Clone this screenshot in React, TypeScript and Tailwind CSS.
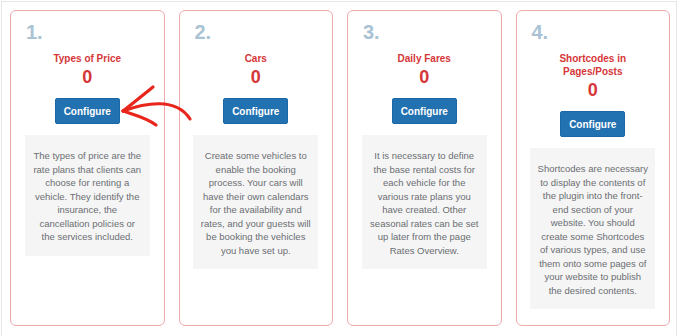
import React from "react";

type Step = {
  num: string;
  title: string[];
  lines: string[];
};

const steps: Step[] = [
  {
    num: "1.",
    title: ["Types of Price"],
    lines: [
      "The types of price are the",
      "rate plans that clients can",
      "choose for renting a",
      "vehicle. They identify the",
      "insurance, the",
      "cancellation policies or",
      "the services included.",
    ],
  },
  {
    num: "2.",
    title: ["Cars"],
    lines: [
      "Create some vehicles to",
      "enable the booking",
      "process. Your cars will",
      "have their own calendars",
      "for the availability and",
      "rates, and your guests will",
      "be booking the vehicles",
      "you have set up.",
    ],
  },
  {
    num: "3.",
    title: ["Daily Fares"],
    lines: [
      "It is necessary to define",
      "the base rental costs for",
      "each vehicle for the",
      "various rate plans you",
      "have created. Other",
      "seasonal rates can be set",
      "up later from the page",
      "Rates Overview.",
    ],
  },
  {
    num: "4.",
    title: ["Shortcodes in", "Pages/Posts"],
    lines: [
      "Shortcodes are necessary",
      "to display the contents of",
      "the plugin into the front-",
      "end section of your",
      "website. You should",
      "create some Shortcodes",
      "of various types, and use",
      "them onto some pages of",
      "your website to publish",
      "the desired contents.",
    ],
  },
];

function StepCard({ step }: { step: Step }) {
  return (
    <div className="flex flex-col items-center rounded-[6px] border border-[#f0a9a9] bg-white px-[14px] pt-[11px]">
      <div className="self-start pl-[1px] text-[20px] font-bold leading-[20px] text-[#aac3d4]">
        {step.num}
      </div>
      <div className="mt-[10px] text-center text-[10px] font-bold leading-[13px] text-[#d63638]">
        {step.title.map((t) => (
          <div key={t}>{t}</div>
        ))}
      </div>
      <div className="mt-[1px] text-[18px] font-bold leading-[22px] text-[#d63638]">0</div>
      <button className="mt-[10px] h-[26px] w-[65px] rounded-[2px] border border-[#1c68a6] bg-[#2271b1] text-[10px] font-bold text-white">
        Configure
      </button>
      <div className="mt-[11px] w-[125px] bg-[#f5f5f5] pb-[12px] pt-[14px] text-center text-[9.5px] leading-[13.5px] text-[#6b6e73]">
        {step.lines.map((l) => (
          <div key={l} className="whitespace-nowrap">
            {l}
          </div>
        ))}
      </div>
    </div>
  );
}

export default function App() {
  return (
    <div
      className="relative h-[336px] w-[680px] overflow-hidden bg-white"
      style={{ fontFamily: '"Liberation Sans", Arial, sans-serif' }}
    >
      <div className="ml-px mt-px h-[340px] w-[676px] border border-[#e6e6e6] pl-[8px] pr-[6px] pt-[8px]">
        <div className="grid h-[316px] grid-cols-4 gap-[14px]">
          {steps.map((s) => (
            <StepCard key={s.num} step={s} />
          ))}
        </div>
      </div>

      {/* hand-drawn arrow pointing at the first button */}
      <svg
        className="pointer-events-none absolute left-0 top-0"
        width="680"
        height="336"
        fill="none"
        stroke="#e8261c"
        strokeWidth="3.2"
        strokeLinecap="round"
        strokeLinejoin="round"
      >
        <path d="M123 111 C 145 103, 176 97, 190 119" />
        <path d="M153 87 C 143 95, 132 104, 123 111" />
        <path d="M123 111 C 135 115, 147 118, 156 125" />
      </svg>
    </div>
  );
}
